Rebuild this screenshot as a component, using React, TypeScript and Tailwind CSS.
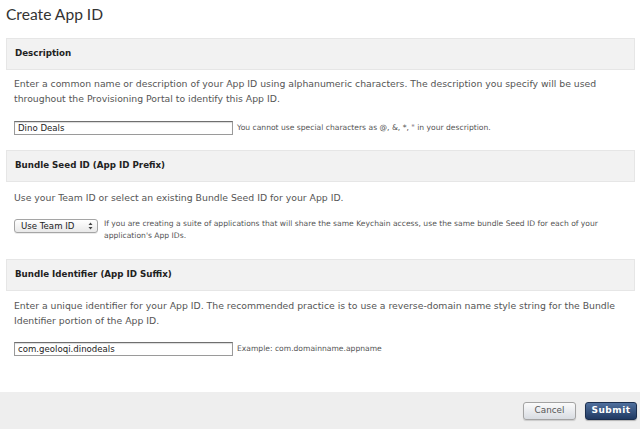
import type { ReactNode } from 'react';

function SectionHeader({ title }: { title: string }) {
  return (
    <div className="flex h-[32px] items-center border border-[#e6e6e6] bg-[#f2f2f2] px-[8px] text-[8.7px] font-bold text-[#222]">
      {title}
    </div>
  );
}

function TextField({ value }: { value: string }) {
  return (
    <div className="flex h-[14px] w-[219px] shrink-0 items-center border border-[#9a9a9a] border-t-[#6f6f6f] bg-white px-[3px] text-[8.6px] text-[#222] shadow-[inset_0_1px_1px_rgba(0,0,0,0.15)]">
      {value}
    </div>
  );
}

function Hint({ children, className = '' }: { children: ReactNode; className?: string }) {
  return <p className={`text-[7.6px] leading-[12px] text-[#555] ${className}`}>{children}</p>;
}

export default function App() {
  return (
    <div className="flex h-[429px] w-[640px] flex-col overflow-hidden bg-white font-['DejaVu_Sans',sans-serif] text-[#555]">
      <h1 className="px-[6px] pt-[2px] font-['Lato',sans-serif] text-[15.6px] leading-[24px] text-[#333]">
        Create App ID
      </h1>

      <div className="flex-1 pl-[6px] pr-[5px] pt-[12px]">
        <SectionHeader title="Description" />
        <div className="px-[8px] pb-[15px]">
          <p className="mt-[6px] text-[9.3px] leading-[15px]">
            Enter a common name or description of your App ID using alphanumeric characters. The description you specify will be used throughout the Provisioning Portal to identify this App ID.
          </p>
          <div className="mt-[15px] flex items-center gap-[4px]">
            <TextField value="Dino Deals" />
            <Hint>You cannot use special characters as @, &amp;, *, " in your description.</Hint>
          </div>
        </div>

        <SectionHeader title="Bundle Seed ID (App ID Prefix)" />
        <div className="px-[8px] pb-[17px]">
          <p className="mt-[8px] text-[9.3px] leading-[15px]">
            Use your Team ID or select an existing Bundle Seed ID for your App ID.
          </p>
          <div className="mt-[14px] flex items-start gap-[6px]">
            <div className="flex h-[14px] w-[84px] shrink-0 items-center justify-between rounded-[3px] border border-[#a5a5a5] bg-gradient-to-b from-white to-[#e9e9e9] pl-[6px] pr-[4px] text-[8.6px] text-[#222] shadow-[0_1px_0_rgba(0,0,0,0.08)]">
              <span>Use Team ID</span>
              <svg width="5" height="8" viewBox="0 0 5 8" className="text-[#444]">
                <path d="M2.5 0.5 L4.5 3 H0.5 Z M2.5 7.5 L4.5 5 H0.5 Z" fill="currentColor" />
              </svg>
            </div>
            <Hint className="mt-[-1px]">
              If you are creating a suite of applications that will share the same Keychain access, use the same bundle Seed ID for each of your application's App IDs.
            </Hint>
          </div>
        </div>

        <SectionHeader title="Bundle Identifier (App ID Suffix)" />
        <div className="px-[8px]">
          <p className="mt-[7px] text-[9.3px] leading-[15px]">
            Enter a unique identifier for your App ID. The recommended practice is to use a reverse-domain name style string for the Bundle Identifier portion of the App ID.
          </p>
          <div className="mt-[14px] flex items-center gap-[4px]">
            <TextField value="com.geoloqi.dinodeals" />
            <Hint>Example: com.domainname.appname</Hint>
          </div>
        </div>
      </div>

      <div className="flex h-[37px] shrink-0 items-center justify-end gap-[9px] bg-[#eeeeee] pr-[3px]">
        <button className="h-[18px] w-[53px] rounded-[3px] border border-[#a3a3a3] bg-gradient-to-b from-[#fbfbfb] to-[#d8dce2] text-[8.8px] text-[#555] shadow-[0_1px_1px_rgba(0,0,0,0.15)]">
          Cancel
        </button>
        <button className="h-[18px] w-[52px] rounded-[3px] border border-[#1c2f4f] bg-gradient-to-b from-[#50709d] to-[#213a63] text-[9px] font-bold tracking-[0.5px] text-white shadow-[0_1px_1px_rgba(0,0,0,0.25)]">
          Submit
        </button>
      </div>
    </div>
  );
}
